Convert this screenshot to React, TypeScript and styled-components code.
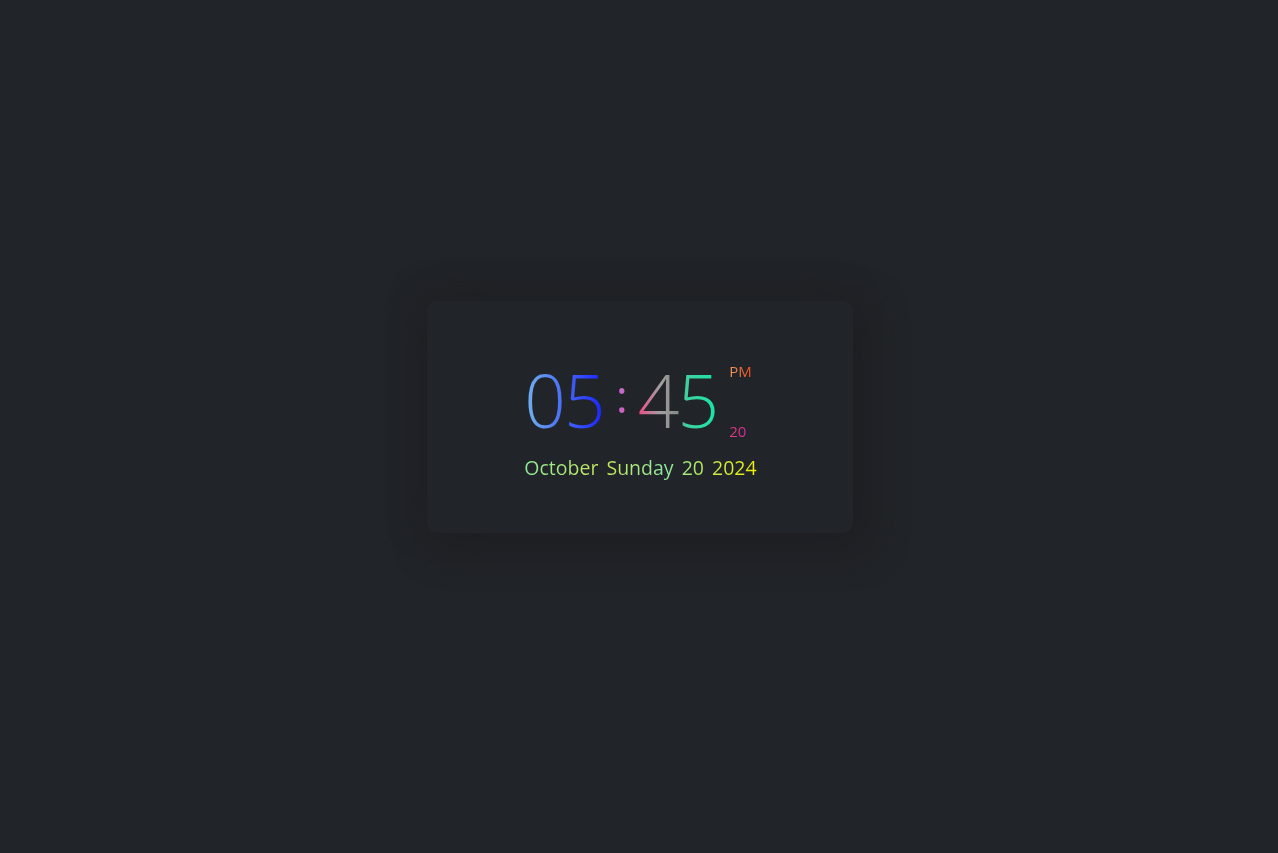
import React from 'react';
import styled, { createGlobalStyle } from 'styled-components';

const GlobalStyle = createGlobalStyle`
  html, body {
    margin: 0;
    padding: 0;
    background: #212428;
  }
  #root {
    min-height: 100vh;
  }
`;

const Page = styled.div`
  min-height: 100vh;
  display: flex;
  align-items: center;
  justify-content: center;
  background: #212428;
  font-family: 'Open Sans', 'Noto Sans', sans-serif;
`;

const Card = styled.div`
  box-sizing: border-box;
  width: 426px;
  height: 232px;
  padding-top: 8px;
  margin-left: 2px;
  margin-top: -20px;
  background: #212428;
  border-radius: 10px;
  box-shadow: 10px 10px 40px #1c1e22, -6px -6px 30px #1f2226;
  display: flex;
  flex-direction: column;
  align-items: center;
  justify-content: center;
  gap: 15px;
`;

const TimeRow = styled.div`
  display: flex;
  align-items: center;
  margin-left: -4px;
`;

const Gradient = styled.span<{ $bg: string }>`
  background: ${(p) => p.$bg};
  -webkit-background-clip: text;
  background-clip: text;
  color: transparent;
`;

const Digits = styled(Gradient)`
  font-size: 73px;
  font-weight: 300;
  line-height: 1;
  letter-spacing: -2px;
`;

const Colon = styled(Gradient)`
  font-size: 46px;
  font-weight: 400;
  line-height: 1;
  margin: -10px 10px 0 12px;
`;

const Side = styled.div`
  display: flex;
  flex-direction: column;
  justify-content: space-between;
  height: 75px;
  margin-left: 12px;
  margin-top: 4px;
`;

const Small = styled(Gradient)`
  font-size: 15px;
  font-weight: 400;
  line-height: 1;
`;

const DateLine = styled(Gradient)`
  font-size: 19.5px;
  font-weight: 500;
  word-spacing: 3px;
  margin-left: 1px;
`;

export default function App() {
  return (
    <>
      <GlobalStyle />
      <Page>
        <Card>
          <TimeRow>
            <Digits $bg="linear-gradient(90deg, #74b4ec, #1a22ff)">05</Digits>
            <Colon $bg="linear-gradient(180deg, #c070d0, #d060c0)">:</Colon>
            <Digits $bg="linear-gradient(90deg, #f04a88 0%, #a0a0a0 28%, #8a8a8a 48%, #40d0a0 62%, #18e6a6 100%)">45</Digits>
            <Side>
              <Small $bg="linear-gradient(90deg, #f0a060, #f04a1a)">PM</Small>
              <Small $bg="linear-gradient(90deg, #e0407a, #e020b0)">20</Small>
            </Side>
          </TimeRow>
          <DateLine $bg="linear-gradient(90deg, #8ee89a, #c8e85a 35%, #8ee8a0 60%, #f4f000)">
            October Sunday 20 2024
          </DateLine>
        </Card>
      </Page>
    </>
  );
}
